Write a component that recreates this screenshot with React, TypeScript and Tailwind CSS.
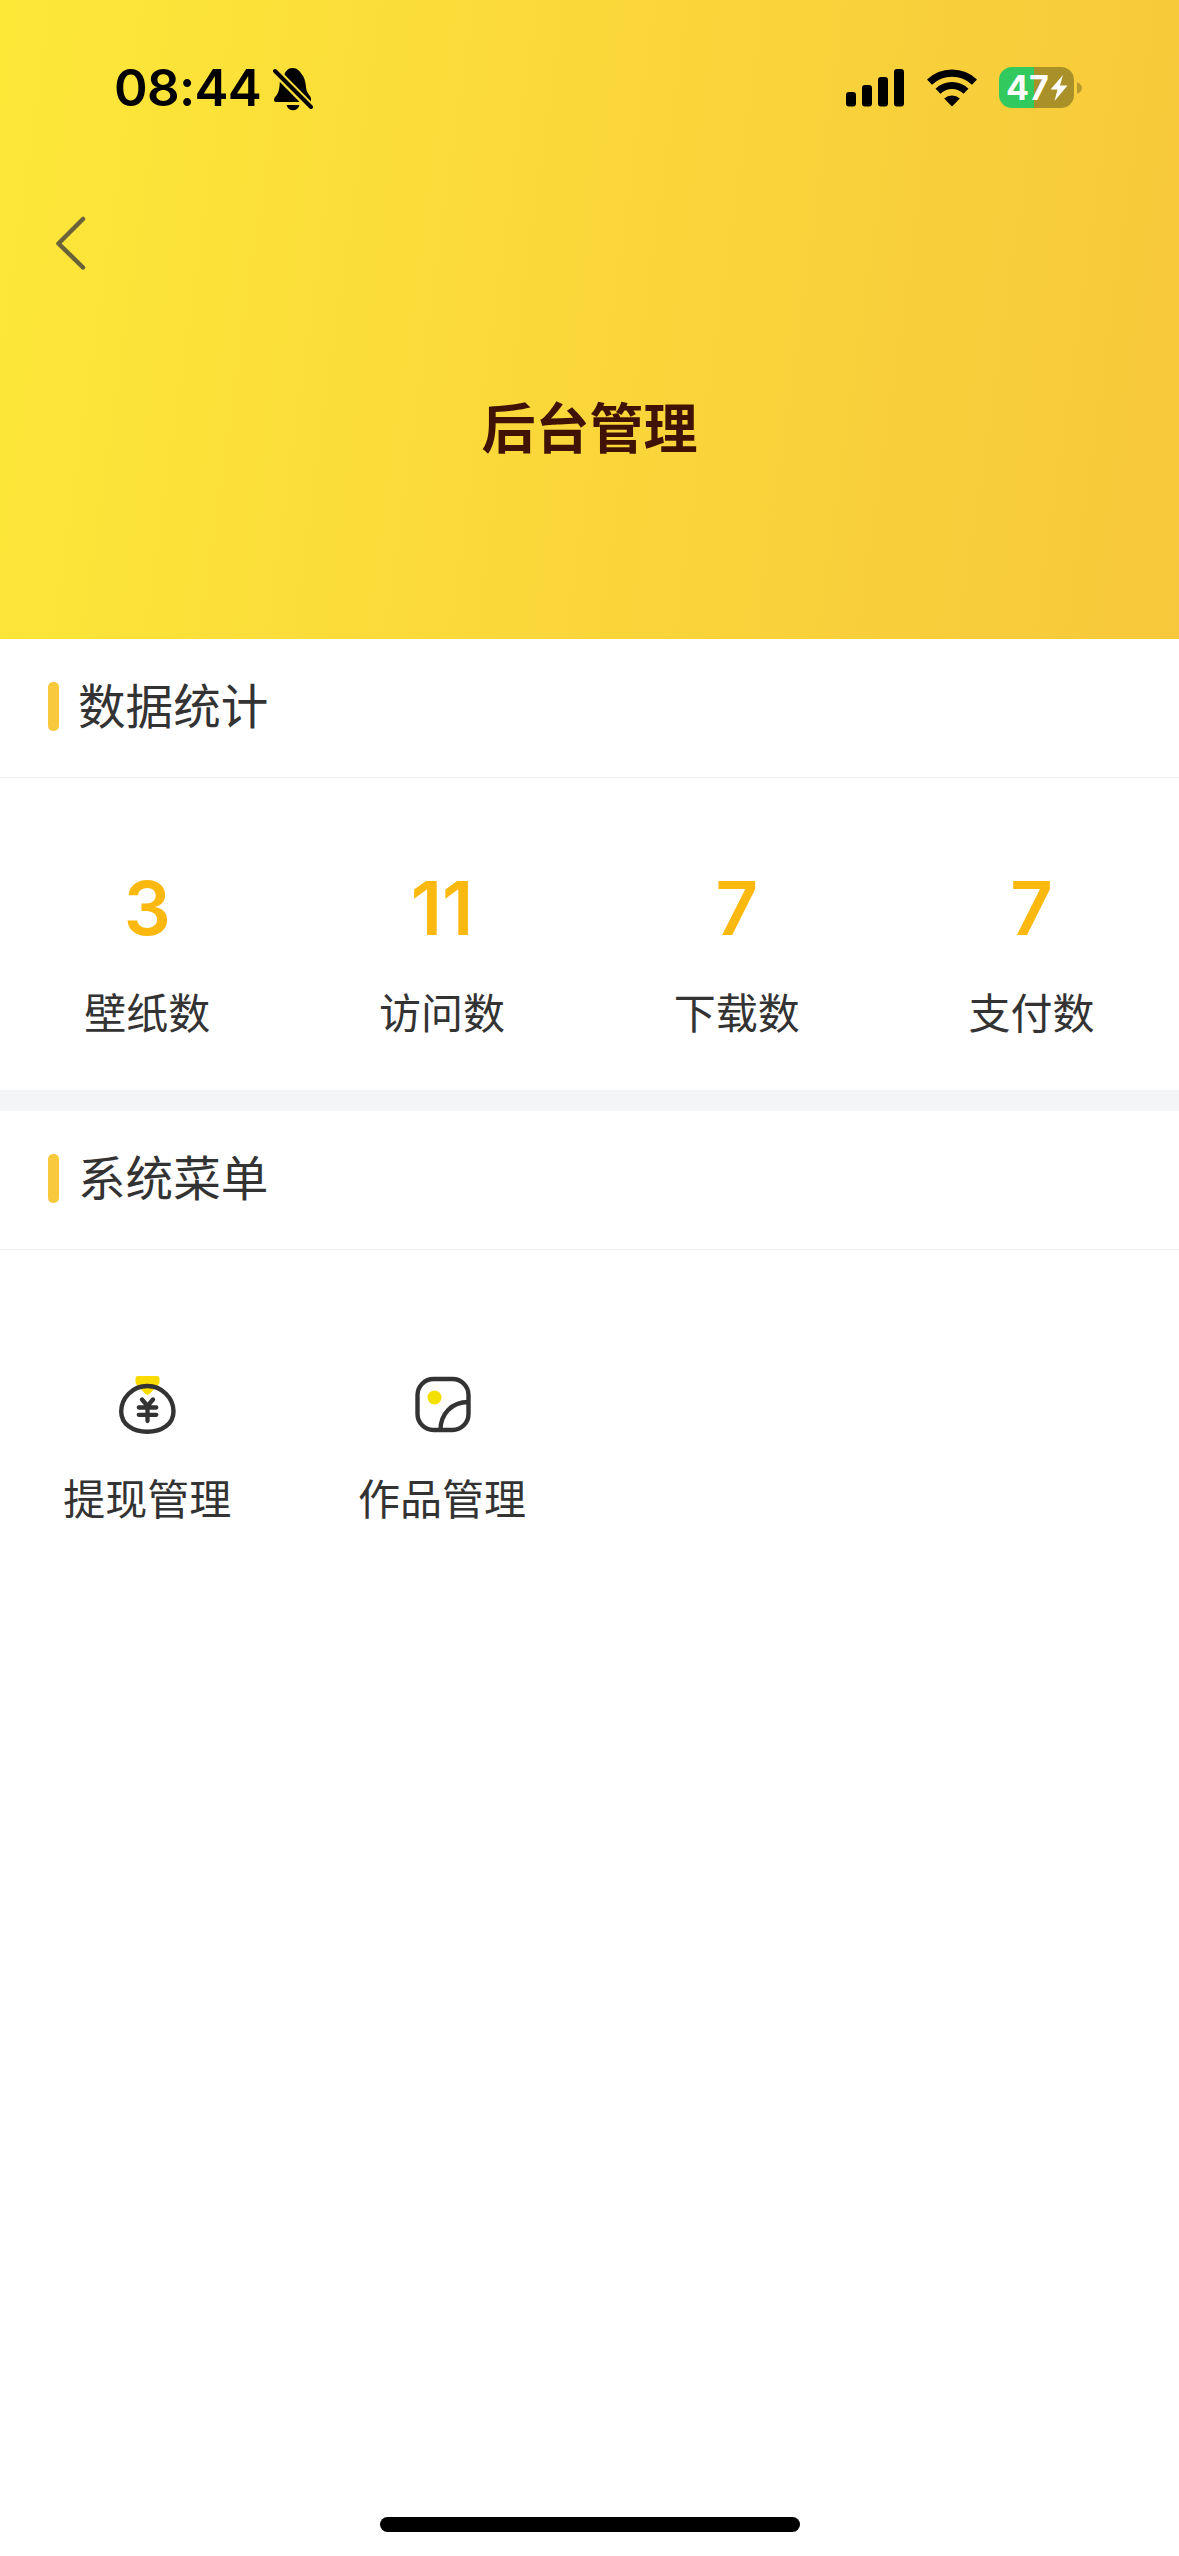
import { ReactNode } from 'react';

const stats = [
  { label: '壁纸数', value: 3 },
  { label: '访问数', value: 11 },
  { label: '下载数', value: 7 },
  { label: '支付数', value: 7 },
];

const menus = [
  { label: '提现管理', icon: <WithdrawIcon /> },
  { label: '作品管理', icon: <WorksIcon /> },
];

function BellOffIcon() {
  return (
    <svg className="ml-[12px] mt-[1px] h-[44px] w-[40px]" viewBox="0 0 40 44">
      <path
        d="M11.5 7.5C12.2 4.5 15 1 19.5 1C24.5 1 27 4.5 28.5 7C31.5 10 32.5 15 33 20C33.4 25.5 36 26.5 38 31V35H3C0.5 35 0.5 31.5 2.5 29.5C5 27 6.5 23 6.8 15Z"
        fill="black"
      />
      <path d="M13.5 38H26.500C25.500 41.500 23 43.300 20 43.300C17 43.300 14.500 41.500 13.500 38Z" fill="black" />
      <path d="M-1 1L42 44.500" stroke="#fbdf3a" strokeWidth="8.500" />
      <path d="M2 4L38 40" stroke="black" strokeWidth="4" strokeLinecap="round" />
    </svg>
  );
}

function SignalIcon() {
  return (
    <svg className="h-[38px] w-[58px]" viewBox="0 0 58 38" fill="black">
      <rect x="0" y="23" width="10" height="14.500" rx="3" />
      <rect x="16" y="16" width="10" height="21.500" rx="3" />
      <rect x="32" y="8" width="10" height="29.500" rx="3" />
      <rect x="48" y="0" width="10" height="37.500" rx="3" />
    </svg>
  );
}

function WifiIcon() {
  return (
    <svg className="h-[38px] w-[50px]" viewBox="0 0 50 38" fill="none" stroke="black">
      <path d="M2.500 13.200A32.500 32.500 0 0 1 47.500 13.200" strokeWidth="7.200" />
      <path d="M11 22.200A20 20 0 0 1 39 22.200" strokeWidth="7" />
      <path d="M17.200 29.500A11.500 11.500 0 0 1 32.800 29.500L25.800 36.800Q25 37.600 24.200 36.800Z" fill="black" stroke="none" />
    </svg>
  );
}

function Battery() {
  return (
    <div className="flex items-center gap-[3px]">
      <div className="flex h-[41px] w-[75px] items-center rounded-[13px] bg-[linear-gradient(90deg,#32c95f_47%,#aa9029_47%)] pl-[7px]">
        <span className="text-[34px] leading-[41px] font-bold text-white">47</span>
        <svg className="ml-[1px] h-[26px] w-[18px] shrink-0" viewBox="0 0 18 26" fill="white">
          <path d="M13 0L0.500 14.500H7.500L4.500 26L17.500 10.500H10Z" />
        </svg>
      </div>
      <svg className="h-[12px] w-[5px]" viewBox="0 0 5 12">
        <path d="M0 0C3 1.500 5 3.500 5 6C5 8.500 3 10.500 0 12Z" fill="#b89a2a" />
      </svg>
    </div>
  );
}

function WithdrawIcon() {
  return (
    <svg className="h-[60px] w-[60px]" viewBox="0 0 60 60" fill="none">
      <path
        d="M20.500 1H40.500Q42.500 1 42.500 3.500V7Q42.500 8.500 41.500 9.500L33 18.500Q30.500 21 28 18.500L19.500 9.500Q18.500 8.500 18.500 7V3.500Q18.500 1 20.500 1Z"
        fill="#fadb00"
      />
      <path
        d="M30.300 11C15.500 11 4.200 23 4.200 36.500C4.200 49 15.500 56.800 30.300 56.800C45 56.800 56.500 49 56.500 36.500C56.500 23 45 11 30.300 11Z"
        stroke="#333333"
        strokeWidth="4.400"
      />
      <path
        d="M25 24.500L30.500 31L36 24.500M21.800 32.500H39.300M21.800 39.800H39.300M30.500 31V46"
        stroke="#333333"
        strokeWidth="4.300"
        strokeLinecap="round"
      />
    </svg>
  );
}

function WorksIcon() {
  return (
    <svg className="h-[60px] w-[60px]" viewBox="0 0 60 60" fill="none">
      <rect x="5.500" y="4" width="51" height="51" rx="16" stroke="#333333" strokeWidth="4.400" />
      <circle cx="22.500" cy="22.500" r="7" fill="#f3df00" />
      <path d="M28.500 55C28.500 39 39.500 27 56.500 27" stroke="#333333" strokeWidth="4.400" />
    </svg>
  );
}

function Section({ title, children }: { title: string; children: ReactNode }) {
  return (
    <section>
      <div className="flex h-[139px] items-start border-b border-[#efefef] pl-[48px] pt-[43px]">
        <span className="h-[49px] w-[11px] rounded-[5px] bg-[#f8c93c]" />
        <h2 className="ml-[19px] text-[47.600px] leading-[49px] text-[#333333]">{title}</h2>
      </div>
      {children}
    </section>
  );
}

export default function App() {
  return (
    <div className="flex h-[2556px] w-[1179px] flex-col bg-white font-['Inter','Noto_Sans_CJK_SC',sans-serif]">
      <header className="h-[639px] bg-[linear-gradient(98deg,#fde838_0%,#fad63a_52%,#f7c83b_100%)]">
        <div className="flex h-[176px] items-start justify-between pl-[114px] pr-[97px] pt-[66px]">
          <div className="flex items-start">
            <span className="text-[51px] leading-[44px] font-semibold tracking-[-0.700px] text-black">08:44</span>
            <BellOffIcon />
          </div>
          <div className="flex h-[43px] items-center">
            <SignalIcon />
            <span className="w-[23px]" />
            <WifiIcon />
            <span className="w-[22px]" />
            <Battery />
          </div>
        </div>
        <button className="ml-[54px] mt-[38px] block">
          <svg className="h-[58px] w-[34px]" viewBox="0 0 34 58" fill="none">
            <path d="M29 5L4.500 29.500L29 53.500" stroke="#6a6238" strokeWidth="4.500" strokeLinecap="round" strokeLinejoin="round" />
          </svg>
        </button>
        <h1 className="mt-[127px] text-center text-[54px] leading-[62px] font-bold text-[#3f1204]">后台管理</h1>
      </header>

      <Section title="数据统计">
        <div className="grid h-[312px] grid-cols-4 pt-[89px]">
          {stats.map((s) => (
            <div key={s.label} className="flex flex-col items-center">
              <span className="text-[74px] leading-[82px] font-semibold text-[#fbb90f]">{s.value}</span>
              <span className="mt-[35px] text-[42px] leading-[60px] text-[#333333]">{s.label}</span>
            </div>
          ))}
        </div>
      </Section>

      <div className="h-[21px] bg-[#f3f5f7]" />

      <Section title="系统菜单">
        <div className="grid grid-cols-4 pt-[125px]">
          {menus.map((m) => (
            <div key={m.label} className="flex flex-col items-center">
              {m.icon}
              <span className="mt-[35px] text-[42px] leading-[60px] text-[#333333]">{m.label}</span>
            </div>
          ))}
        </div>
      </Section>

      <div className="mx-auto mt-auto mb-[24px] h-[15px] w-[420px] rounded-full bg-black" />
    </div>
  );
}
